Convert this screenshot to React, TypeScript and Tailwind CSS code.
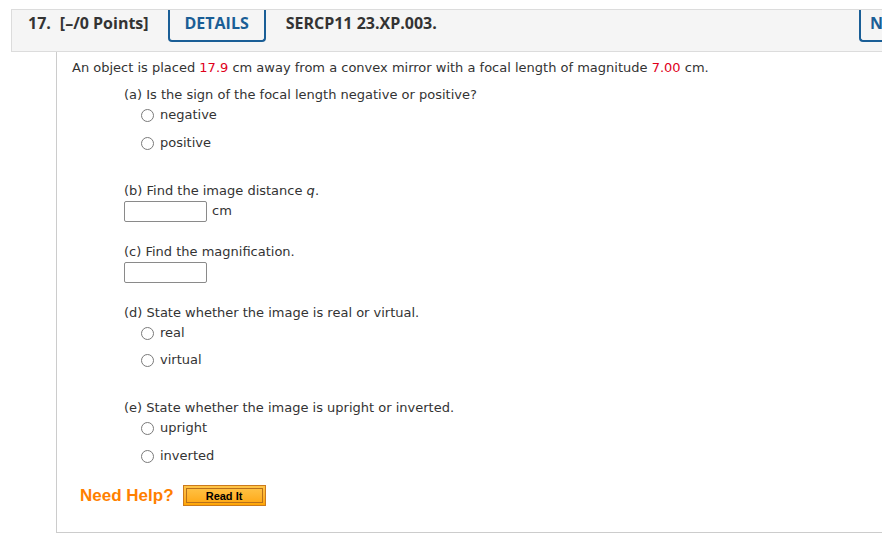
import React from "react";

function Radio({ label }: { label: string }) {
  return (
    <label className="flex h-[20px] items-center">
      <span className="ml-[17px] mr-[6px] inline-block h-[13px] w-[13px] rounded-full border border-[#7a7a7a] bg-white" />
      <span>{label}</span>
    </label>
  );
}

function Prompt({ children }: { children: React.ReactNode }) {
  return <p className="h-[20px] leading-[20px]">{children}</p>;
}

function Box() {
  return <span className="inline-block h-[21px] w-[83px] rounded-[2px] border border-[#8a8a8a] bg-white" />;
}

export default function App() {
  const body = { fontFamily: '"DejaVu Sans", Verdana, sans-serif' };

  return (
    <main className="h-[549px] w-[882px] overflow-hidden bg-white pt-[9px]">
      <header
        className="ml-[11px] flex h-[43px] items-start border-y border-l border-[#dcdcdc] bg-[#f5f5f5] text-[16px] font-bold text-[#333]"
        style={{ fontFamily: '"Open Sans", sans-serif' }}
      >
        <span className="ml-[16px] mt-[1px]">17.</span>
        <span className="ml-[9px] mt-[1px]">[–/0 Points]</span>
        <div className="ml-[19px] flex h-[32px] w-[98px] justify-center rounded-b-[4px] border-x-2 border-b-2 border-[#1a5e96] pt-[1px] text-[#1a5e96]">
          DETAILS
        </div>
        <span className="ml-[20px] mt-[1px]">SERCP11 23.XP.003.</span>
        <div className="ml-auto flex h-[32px] w-[23px] overflow-hidden rounded-bl-[4px] border-b-2 border-l-2 border-[#1a5e96] pl-[9px] pt-[1px] text-[#1a5e96]">
          <span>N</span>
        </div>
      </header>

      <section
        className="ml-[56px] h-[481px] border-b border-l border-[#cccccc] pl-[15px] pt-[6px] text-[13px] text-[#333]"
        style={body}
      >
        <p className="h-[20px] leading-[20px]">
          An object is placed <span className="text-[#e0001b]">17.9</span> cm away from a convex mirror with a focal
          length of magnitude <span className="text-[#e0001b]">7.00</span> cm.
        </p>

        <div className="ml-[52px]">
          <div className="mt-[7px]">
            <Prompt>(a) Is the sign of the focal length negative or positive?</Prompt>
            <Radio label="negative" />
            <div className="mt-[8px]">
              <Radio label="positive" />
            </div>
          </div>

          <div className="mt-[28px]">
            <Prompt>
              (b) Find the image distance <i>q</i>.
            </Prompt>
            <div className="flex items-center gap-[5px]">
              <Box />
              <span className="-mt-[2px]">cm</span>
            </div>
          </div>

          <div className="mt-[20px]">
            <Prompt>(c) Find the magnification.</Prompt>
            <div className="flex">
              <Box />
            </div>
          </div>

          <div className="mt-[20px]">
            <Prompt>(d) State whether the image is real or virtual.</Prompt>
            <Radio label="real" />
            <div className="mt-[7px]">
              <Radio label="virtual" />
            </div>
          </div>

          <div className="mt-[28px]">
            <Prompt>(e) State whether the image is upright or inverted.</Prompt>
            <Radio label="upright" />
            <div className="mt-[8px]">
              <Radio label="inverted" />
            </div>
          </div>
        </div>

        <div className="ml-[8px] mt-[17px] flex items-center gap-[9px]">
          <span
            className="text-[17px] font-bold text-[#ff7f00]"
            style={{ fontFamily: '"Liberation Sans", Arial, sans-serif' }}
          >
            Need Help?
          </span>
          <button
            className="flex h-[21px] w-[83px] items-center justify-center border border-[#cc7a1c] bg-gradient-to-b from-[#ffc548] to-[#ffa600] p-[2px]"
            style={{ fontFamily: '"Liberation Sans", Arial, sans-serif' }}
          >
            <span className="flex h-full w-full items-center justify-center border border-[#b8701a] text-[11px] font-bold text-black">
              Read It
            </span>
          </button>
        </div>
      </section>
    </main>
  );
}
